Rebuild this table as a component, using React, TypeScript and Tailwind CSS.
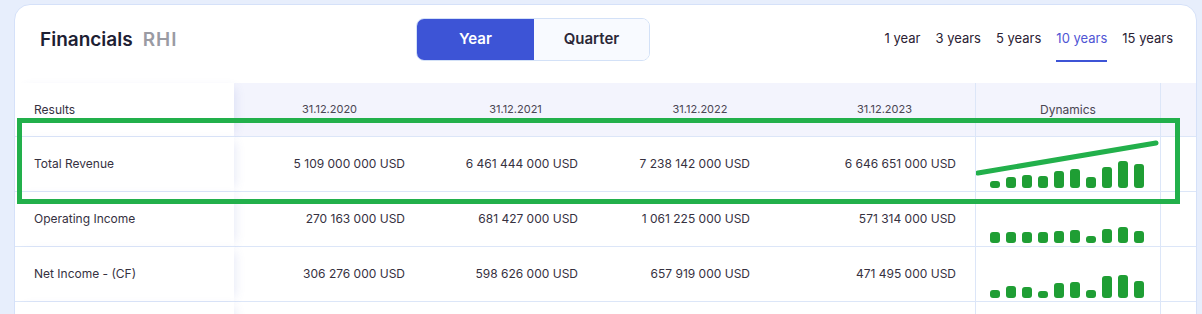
import React from 'react';

interface Row {
  label: string;
  values: string[];
  bars: number[];
  trend?: boolean;
}

const DATES = ['31.12.2020', '31.12.2021', '31.12.2022', '31.12.2023'];
const VALUE_PAD = ['pr-[17px]', 'pr-[28px]', 'pr-[41px]', 'pr-[19px]'];

const ROWS: Row[] = [
  {
    label: 'Total Revenue',
    values: ['5 109 000 000 USD', '6 461 444 000 USD', '7 238 142 000 USD', '6 646 651 000 USD'],
    bars: [7, 11, 13, 12, 17, 19, 11, 21, 27, 24],
    trend: true,
  },
  {
    label: 'Operating Income',
    values: ['270 163 000 USD', '681 427 000 USD', '1 061 225 000 USD', '571 314 000 USD'],
    bars: [11, 11, 11, 11, 12, 13, 7, 14, 16, 12],
  },
  {
    label: 'Net Income - (CF)',
    values: ['306 276 000 USD', '598 626 000 USD', '657 919 000 USD', '471 495 000 USD'],
    bars: [8, 12, 11, 7, 15, 16, 8, 22, 23, 17],
  },
  {
    label: '',
    values: ['', '', '', ''],
    bars: [],
  },
];

const PERIODS = ['1 year', '3 years', '5 years', '10 years', '15 years'];

const firstCol = 'bg-white relative z-10 shadow-[6px_0_10px_-5px_rgba(70,90,190,0.14)]';

export default function App() {
  return (
    <div className="relative min-h-screen bg-[#e7eefc] pt-1 pl-[14px] pr-[5px] font-['Inter',sans-serif] overflow-hidden">
      <div className="bg-white border border-[#d5e1f9] rounded-[16px] overflow-hidden">
        {/* header */}
        <div className="flex items-start h-[78px] pl-[25px] pr-[23px]">
          <div className="w-[376px] mt-[21px] flex items-baseline gap-[10px] text-[19px] leading-[28px] font-semibold">
            <span className="text-[#1d2033]">Financials</span>
            <span className="text-[#9a9ba3] tracking-[1px]">RHI</span>
          </div>
          <div className="mt-[13px] flex h-[43px] rounded-[8px] border border-[#d3e1f7] overflow-hidden text-[15px] font-semibold">
            <button className="w-[117px] bg-[#3d54d6] text-white">Year</button>
            <button className="w-[115px] bg-[#f8faff] text-[#2b2838]">Quarter</button>
          </div>
          <div className="ml-auto mt-[23px] flex gap-[15px] text-[13px]">
            {PERIODS.map((p) => (
              <div key={p} className="flex flex-col items-center">
                <span className={`leading-[20px] ${p === '10 years' ? 'text-[#4f55d4]' : 'text-[#2a2133]'}`}>{p}</span>
                <div className={`mt-[12px] h-[2px] w-full ${p === '10 years' ? 'bg-[#3d54d6]' : ''}`} />
              </div>
            ))}
          </div>
        </div>

        {/* table */}
        <div className="grid grid-cols-[219px_188px_184px_185px_184px_186px_35px] text-[12px] text-[#36313f]">
          <div className={`${firstCol} h-[54px] border-b border-[#dce6f8] flex items-center pl-[19px]`}>Results</div>
          {DATES.map((d) => (
            <div key={d} className="h-[54px] bg-[#f3f4fd] border-b border-[#dce6f8] flex items-center justify-center text-[11px] pl-[3px] text-[#4a4652]">
              {d}
            </div>
          ))}
          <div className="h-[54px] bg-[#f3f4fd] border-b border-x border-[#dce6f8] flex items-center justify-center text-[#4a4652]">
            Dynamics
          </div>
          <div className="h-[54px] bg-[#f3f4fd] border-b border-[#dce6f8]" />

          {ROWS.map((row, r) => (
            <React.Fragment key={r}>
              <div className={`${firstCol} h-[55px] border-b border-[#dce6f8] flex items-center pl-[19px]`}>{row.label}</div>
              {row.values.map((v, i) => (
                <div key={i} className={`h-[55px] border-b border-[#dce6f8] flex items-center justify-end ${VALUE_PAD[i]}`}>
                  {v}
                </div>
              ))}
              <div className="relative h-[55px] border-b border-x border-[#dce6f8] flex items-end gap-[6px] pl-[14px] pb-[3px]">
                {row.bars.map((h, i) => (
                  <div key={i} className="w-[10px] rounded-[3px] bg-[#1f9e34]" style={{ height: h }} />
                ))}
                {row.trend && (
                  <svg className="absolute left-0 top-0" width="186" height="55">
                    <line x1="2" y1="36" x2="180" y2="6" stroke="#22b04b" strokeWidth="5" strokeLinecap="round" />
                  </svg>
                )}
              </div>
              <div className="h-[55px] border-b border-[#dce6f8]" />
            </React.Fragment>
          ))}
        </div>
      </div>

      {/* highlight annotation */}
      <div className="absolute z-20 left-[17px] top-[118px] w-[1163px] h-[86px] border-[5px] border-[#22b04b] pointer-events-none" />
    </div>
  );
}
